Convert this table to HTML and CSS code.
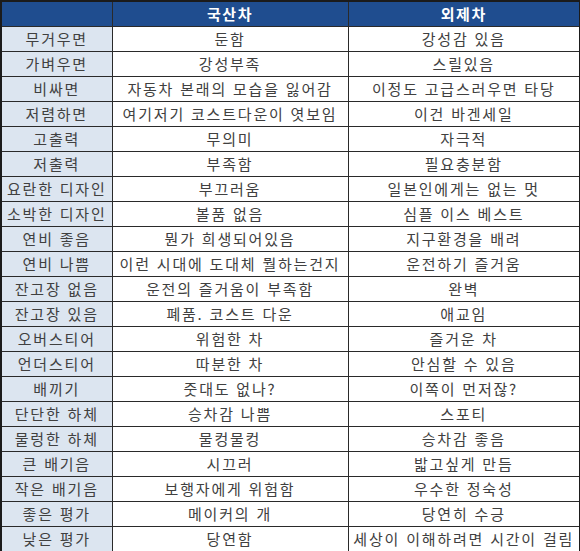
FILE: index.html
```html
<!DOCTYPE html>
<html lang="ko">
<head>
<meta charset="utf-8">
<link rel="stylesheet" href="styles.css">
</head>
<body>
<table class="cmp">
  <colgroup><col class="c1"><col class="c2"><col class="c3"></colgroup>
  <thead>
    <tr><th></th><th>국산차</th><th>외제차</th></tr>
  </thead>
  <tbody>
    <tr><td class="k">무거우면</td><td>둔함</td><td>강성감 있음</td></tr>
    <tr><td class="k">가벼우면</td><td>강성부족</td><td>스릴있음</td></tr>
    <tr><td class="k">비싸면</td><td>자동차 본래의 모습을 잃어감</td><td>이정도 고급스러우면 타당</td></tr>
    <tr><td class="k">저렴하면</td><td>여기저기 코스트다운이 엿보임</td><td>이건 바겐세일</td></tr>
    <tr><td class="k">고출력</td><td>무의미</td><td>자극적</td></tr>
    <tr><td class="k">저출력</td><td>부족함</td><td>필요충분함</td></tr>
    <tr><td class="k">요란한 디자인</td><td>부끄러움</td><td>일본인에게는 없는 멋</td></tr>
    <tr><td class="k">소박한 디자인</td><td>볼품 없음</td><td>심플 이스 베스트</td></tr>
    <tr><td class="k">연비 좋음</td><td>뭔가 희생되어있음</td><td>지구환경을 배려</td></tr>
    <tr><td class="k">연비 나쁨</td><td>이런 시대에 도대체 뭘하는건지</td><td>운전하기 즐거움</td></tr>
    <tr><td class="k">잔고장 없음</td><td>운전의 즐거움이 부족함</td><td>완벽</td></tr>
    <tr><td class="k">잔고장 있음</td><td>폐품. 코스트 다운</td><td>애교임</td></tr>
    <tr><td class="k">오버스티어</td><td>위험한 차</td><td>즐거운 차</td></tr>
    <tr><td class="k">언더스티어</td><td>따분한 차</td><td>안심할 수 있음</td></tr>
    <tr><td class="k">배끼기</td><td>줏대도 없나?</td><td>이쪽이 먼저잖?</td></tr>
    <tr><td class="k">단단한 하체</td><td>승차감 나쁨</td><td>스포티</td></tr>
    <tr><td class="k">물렁한 하체</td><td>물컹물컹</td><td>승차감 좋음</td></tr>
    <tr><td class="k">큰 배기음</td><td>시끄러</td><td>밟고싶게 만듬</td></tr>
    <tr><td class="k">작은 배기음</td><td>보행자에게 위험함</td><td>우수한 정숙성</td></tr>
    <tr><td class="k">좋은 평가</td><td>메이커의 개</td><td>당연히 수긍</td></tr>
    <tr><td class="k">낮은 평가</td><td>당연함</td><td>세상이 이해하려면 시간이 걸림</td></tr>
  </tbody>
</table>
</body>
</html>
```

FILE: styles.css
```css
html, body {
  margin: 0;
  padding: 0;
  background: #ffffff;
}

.cmp {
  border-collapse: collapse;
  table-layout: fixed;
  width: 579px;
  font-family: "Noto Sans CJK KR", "Noto Sans", sans-serif;
  font-size: 15px;
  letter-spacing: 1.8px;
  color: #404040;
  border: 2px solid #1b1b1b;
}

.c1 { width: 111px; }
.c2 { width: 236px; }
.c3 { width: 232px; }

.cmp th,
.cmp td {
  height: 24px;
  padding: 0;
  border: 1px solid #2a2a2a;
  text-align: center;
  vertical-align: middle;
  line-height: 24px;
  white-space: nowrap;
  overflow: hidden;
}

.cmp th {
  background: #1f4d8f;
  color: #ffffff;
  font-weight: bold;
  letter-spacing: 1.5px;
}

.cmp td.k {
  background: #dce5f0;
}
```
